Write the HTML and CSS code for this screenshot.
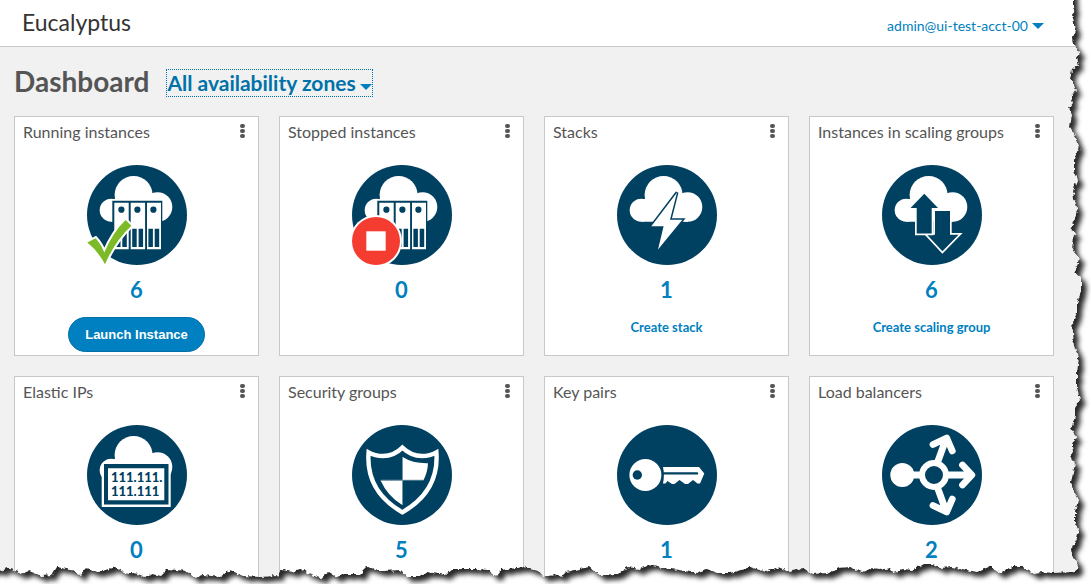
FILE: index.html
```html
<!DOCTYPE html>
<html lang="en">
<head>
<meta charset="utf-8">
<title>Eucalyptus Dashboard</title>
<link rel="stylesheet" href="styles.css">
</head>
<body>
<svg class="defs" aria-hidden="true">
  <symbol id="cloud" viewBox="0 0 100 100">
    <circle cx="24.2" cy="45.2" r="11.5"/>
    <circle cx="46.6" cy="30" r="19"/>
    <circle cx="70.6" cy="42" r="14.7"/>
    <path d="M24.2 34H71V56.7H24.2z"/>
  </symbol>
  <symbol id="servers" viewBox="0 0 100 100">
    <use href="#cloud" fill="#fff"/>
    <path fill="#004061" d="M25.3 35.7h50v48.6h-50z"/>
    <path fill="#fff" d="M27.3 37.7h14.4v46.6H27.3zM43.7 37.7h14.4v46.6H43.7zM60 37.7h14v46.6H60z"/>
    <path fill="#004061" d="M29 63.7h4.5V82H29zM35.3 63.7h4.5V82h-4.5zM45.2 63.7h4.5V82h-4.5zM51.6 63.7h4.5V82h-4.5zM61.4 63.7h4.5V82h-4.5zM67.7 63.7h4.5V82h-4.5z"/>
    <g fill="#004061"><circle cx="34.4" cy="44.7" r="3.1"/><circle cx="50.4" cy="44.7" r="3.1"/><circle cx="66.4" cy="44.7" r="3.1"/></g>
  </symbol>
</svg>
<div class="page">
  <header class="topbar">
    <a class="brand" href="#">Eucalyptus</a>
    <button class="account" type="button">admin@ui-test-acct-00<span class="caret"></span></button>
  </header>
  <main class="content">
    <div class="heading">
      <h1>Dashboard</h1>
      <button class="zones" type="button">All availability zones<span class="caret"></span></button>
    </div>
    <div class="tiles">
      <section class="tile">
        <div class="tile-head"><h2>Running instances</h2><button class="more" type="button" aria-label="Running instances menu"><i></i><i></i><i></i></button></div>
        <svg class="icon" viewBox="0 0 100 100" aria-hidden="true">
          <circle cx="50" cy="50" r="50" fill="#004061"/>
          <use href="#servers"/>
          <path fill="#7dba28" stroke="#fff" stroke-width="4" paint-order="stroke" d="M.3 77.5 8.6 73.2Q14 79 17.3 87.5 26 67 38.6 55l5.8 5.8Q28 76 18 99.3 11 86 .3 77.5z"/>
        </svg>
        <a class="count" href="#">6</a>
        <button class="launch" type="button">Launch Instance</button>
      </section>
      <section class="tile">
        <div class="tile-head"><h2>Stopped instances</h2><button class="more" type="button" aria-label="Stopped instances menu"><i></i><i></i><i></i></button></div>
        <svg class="icon" viewBox="0 0 100 100" aria-hidden="true">
          <circle cx="50" cy="50" r="50" fill="#004061"/>
          <use href="#servers"/>
          <circle cx="24" cy="76" r="26" fill="#fff"/>
          <circle cx="24" cy="76" r="24" fill="#f43c30"/>
          <path fill="#fff" d="M14.3 66.3h19.4v19.4H14.3z"/>
        </svg>
        <a class="count" href="#">0</a>
      </section>
      <section class="tile">
        <div class="tile-head"><h2>Stacks</h2><button class="more" type="button" aria-label="Stacks menu"><i></i><i></i><i></i></button></div>
        <svg class="icon" viewBox="0 0 100 100" aria-hidden="true">
          <circle cx="50" cy="50" r="50" fill="#004061"/>
          <use href="#cloud" fill="#fff"/>
          <path fill="#fff" stroke="#004061" stroke-width="3" paint-order="stroke" d="M60 27.5 34.3 61.3H46.6L41 84.5 65.4 54.8H53z"/>
        </svg>
        <a class="count" href="#">1</a>
        <a class="create" href="#">Create stack</a>
      </section>
      <section class="tile">
        <div class="tile-head"><h2>Instances in scaling groups</h2><button class="more" type="button" aria-label="Instances in scaling groups menu"><i></i><i></i><i></i></button></div>
        <svg class="icon" viewBox="0 0 100 100" aria-hidden="true">
          <circle cx="50" cy="50" r="50" fill="#004061"/>
          <use href="#cloud" fill="#fff"/>
          <g fill="#004061" stroke="#fff" stroke-width="3.4" paint-order="stroke">
            <path d="M53 46H68V69.7H76.6L60.4 86.2 45 69.7H53z"/>
            <path d="M42.3 28.7 28.5 43H34.7V68.6H49.7V43H56z"/>
          </g>
        </svg>
        <a class="count" href="#">6</a>
        <a class="create" href="#">Create scaling group</a>
      </section>
      <section class="tile">
        <div class="tile-head"><h2>Elastic IPs</h2><button class="more" type="button" aria-label="Elastic IPs menu"><i></i><i></i><i></i></button></div>
        <svg class="icon" viewBox="0 0 100 100" aria-hidden="true">
          <circle cx="50" cy="50" r="50" fill="#004061"/>
          <use href="#cloud" fill="#fff"/>
          <path fill="#fff" d="M14.7 40H83.7V82H14.7z"/>
          <path fill="#004061" d="M17 39H81.5V79.6H17z"/>
          <path fill="#fff" d="M21 43.2H77.3V75.2H21z"/>
          <text class="ip"><tspan x="24" y="57">111.111.</tspan><tspan x="24" y="71">111.111</tspan></text>
        </svg>
        <a class="count" href="#">0</a>
      </section>
      <section class="tile">
        <div class="tile-head"><h2>Security groups</h2><button class="more" type="button" aria-label="Security groups menu"><i></i><i></i><i></i></button></div>
        <svg class="icon" viewBox="0 0 100 100" aria-hidden="true">
          <circle cx="50" cy="50" r="50" fill="#004061"/>
          <path fill="none" stroke="#fff" stroke-width="4.4" d="M50.4 22.6Q42 31 31 31 23 31 16.6 27.3 13.5 66 50.4 87.3 87.3 66 84.4 27.3 78 31 70 31 59 31 50.4 22.6z"/>
          <path fill="#fff" d="M50.7 32Q61 38.6 76 38.2 75.6 47 71.6 55H50.7zM28.6 55.4H50.3V80Q35.5 71 28.6 55.4z"/>
          <path stroke="#7f9fb0" stroke-width=".8" d="M50.5 32V80M28.6 55.2H71.6"/>
        </svg>
        <a class="count" href="#">5</a>
      </section>
      <section class="tile">
        <div class="tile-head"><h2>Key pairs</h2><button class="more" type="button" aria-label="Key pairs menu"><i></i><i></i><i></i></button></div>
        <svg class="icon" viewBox="0 0 100 100" aria-hidden="true">
          <circle cx="50" cy="50" r="50" fill="#004061"/>
          <circle cx="28.4" cy="50" r="16" fill="#fff"/>
          <circle cx="20.3" cy="50" r="4.7" fill="#004061"/>
          <path fill="#fff" d="M46 42H82L87.3 48.5 83 58.4 80.5 58.6 76 55 71 59H68L62.5 55 57.5 59H55L50.5 56 48.5 58.6H46Q47.8 50 46 42z"/>
          <path stroke="#004061" stroke-width="2.4" stroke-linecap="round" d="M46 48.4H80"/>
        </svg>
        <a class="count" href="#">1</a>
      </section>
      <section class="tile">
        <div class="tile-head"><h2>Load balancers</h2><button class="more" type="button" aria-label="Load balancers menu"><i></i><i></i><i></i></button></div>
        <svg class="icon" viewBox="0 0 100 100" aria-hidden="true">
          <circle cx="50" cy="50" r="50" fill="#004061"/>
          <circle cx="20.3" cy="50" r="12" fill="#fff"/>
          <g fill="none" stroke="#fff" stroke-width="6.8" stroke-linejoin="round" stroke-linecap="round">
            <circle cx="52" cy="50" r="12" stroke-width="6"/>
            <path d="M31 50H37M67 50H89M80.5 40 89.8 50 80.5 60M56 36 64 14M51 19.5 64.7 13 70.3 26M56 64 64 86M51 80.5 64.7 87 70.3 74"/>
          </g>
        </svg>
        <a class="count" href="#">2</a>
      </section>
    </div>
  </main>
  <svg class="torn-edge" viewBox="0 0 1091 584" preserveAspectRatio="none" aria-hidden="true">
    <filter id="tear" filterUnits="userSpaceOnUse" x="-20" y="-20" width="1131" height="624" color-interpolation-filters="sRGB">
      <feTurbulence type="fractalNoise" baseFrequency=".25" numOctaves="2" seed="4" result="noise"/>
      <feDisplacementMap in="SourceGraphic" in2="noise" scale="5" xChannelSelector="R" yChannelSelector="G" result="paper"/>
      <feComponentTransfer in="paper"><feFuncR type="linear" slope="0" intercept=".16"/><feFuncG type="linear" slope="0" intercept=".16"/><feFuncB type="linear" slope="0" intercept=".16"/><feFuncA type="linear" slope="-1" intercept="1"/></feComponentTransfer>
      <feOffset dx="5" dy="5"/>
      <feGaussianBlur stdDeviation="2.5"/>
      <feComposite in2="paper" operator="in" result="shade"/>
      <feMerge><feMergeNode in="paper"/><feMergeNode in="shade"/></feMerge>
    </filter>
    <path filter="url(#tear)" fill="#fff" d="M1073-40V4L1075 10 1072 15 1076 30 1073 37 1074 45 1080 52 1076 58 1078 65 1072 70 1070 78 1073 83 1076 90 1071 97 1073 103 1069 108 1072 115 1070 127 1075 135 1079 145 1077 152 1074 160 1074 172 1077 180 1073 190 1074 198 1078 210 1075 218 1071 227 1075 235 1072 247 1075 252 1080 258 1077 265 1074 272 1081 278 1081 292 1077 303 1077 313 1072 323 1073 332 1074 347 1079 357 1077 373 1077 387 1080 400 1075 408 1075 417 1071 428 1076 437 1072 445 1073 452 1069 457 1075 463 1071 482 1073 490 1078 500 1075 512 1075 522 1079 530 1077 538 1071 550 1073 558 1078 562 1077 570 1073 572 1053 573 1042 572 1033 573 1023 567 1013 567 1005 570 1000 573 991 566 977 572 967 570 952 567 940 568 930 564 923 564 913 570 903 569 893 572 890 568 880 570 870 569 862 572 850 567 838 568 828 573 812 574 802 568 790 572 778 567 766 572 750 567 741 570 730 573 717 573 707 569 695 573 680 570 662 568 648 565 640 569 628 567 617 574 599 575 589 567 566 572 561 577 555 575 543 577 538 571 524 567 501 570 496 576 488 570 475 569 453 569 446 575 427 572 419 577 406 577 400 570 383 571 367 567 360 574 344 574 337 577 329 572 321 578 308 574 302 569 293 572 281 570 277 576 260 577 243 576 230 570 220 577 203 575 195 578 186 571 168 569 161 576 153 574 145 577 138 574 124 572 115 567 99 572 85 569 80 575 71 570 57 567 52 575 42 576 29 571 21 574 15 571 5 567 2 572 0 570H-40V640H1140V-40z"/>
  </svg>
</div>
</body>
</html>
```
FILE: styles.css
```css
* { box-sizing: border-box; }

body {
  margin: 0;
  font-family: Lato, "Liberation Sans", sans-serif;
  color: #555;
  background: #fff;
}

button {
  margin: 0;
  padding: 0;
  border: 0;
  background: none;
  font: inherit;
  cursor: pointer;
}

a { text-decoration: none; }

.defs {
  position: absolute;
  width: 0;
  height: 0;
}

.page {
  position: relative;
  height: 100vh;
  overflow: hidden;
  background: #f1f1f1;
}

.topbar {
  display: flex;
  align-items: center;
  justify-content: space-between;
  height: 47px;
  padding: 0 47px 0 22px;
  border-bottom: 1px solid #c8c8c8;
  background: #fff;
}

.brand {
  padding-bottom: 2px;
  font-size: 23px;
  line-height: 28px;
  color: #333;
}

.account {
  display: flex;
  align-items: center;
  gap: 4px;
  padding-top: 6px;
  font-size: 14px;
  line-height: 20px;
  color: #0080c0;
}

.caret {
  border: 6px solid transparent;
  border-top-color: currentColor;
  border-bottom: 0;
}

.content { padding: 15px 37px 0 14px; }

.heading {
  display: flex;
  align-items: center;
  gap: 17px;
  height: 38px;
  margin-bottom: 16px;
}

h1 {
  margin: 0;
  font-size: 28px;
  line-height: 36px;
  color: #555;
}

.zones {
  display: flex;
  align-items: center;
  gap: 4px;
  height: 28px;
  margin-top: 4px;
  border: 1px dotted #0072aa;
  font-size: 21px;
  font-weight: 700;
  line-height: 26px;
  color: #0072aa;
}

.zones .caret {
  margin-top: 8px;
  color: #0080c0;
}

.tiles {
  display: grid;
  grid-template-columns: repeat(4, 1fr);
  gap: 20px;
}

.tile {
  display: flex;
  flex-direction: column;
  align-items: center;
  min-height: 240px;
  border: 1px solid #c8c8c8;
  background: #fff;
}

.tile-head {
  display: flex;
  align-items: flex-start;
  justify-content: space-between;
  align-self: stretch;
  height: 48px;
  padding: 5px 9px 0 8px;
}

h2 {
  margin: 0;
  font-size: 16px;
  font-weight: 400;
  line-height: 20px;
}

.more {
  display: flex;
  flex-direction: column;
  gap: 1px;
  padding: 2px 4px;
}

.more i {
  width: 5px;
  height: 4px;
  border-radius: 2px;
  background: #555;
}

.icon {
  width: 100px;
  height: 100px;
}

.ip {
  font-size: 13px;
  font-weight: 900;
  fill: #004061;
}

.count {
  margin-top: 11px;
  font-size: 22px;
  font-weight: 700;
  line-height: 28px;
  color: #0080c0;
}

.create {
  margin-top: 13px;
  font-size: 13px;
  font-weight: 700;
  line-height: 20px;
  color: #0080c0;
}

.launch {
  height: 35px;
  margin-top: 13px;
  padding: 0 16px;
  border: 1px solid #006fa8;
  border-radius: 18px;
  background: #0080c0;
  font-family: "Liberation Sans", sans-serif;
  font-size: 13px;
  font-weight: 700;
  color: #fff;
}

.torn-edge {
  position: absolute;
  inset: 0;
  width: 100%;
  height: 100%;
  pointer-events: none;
}
```
